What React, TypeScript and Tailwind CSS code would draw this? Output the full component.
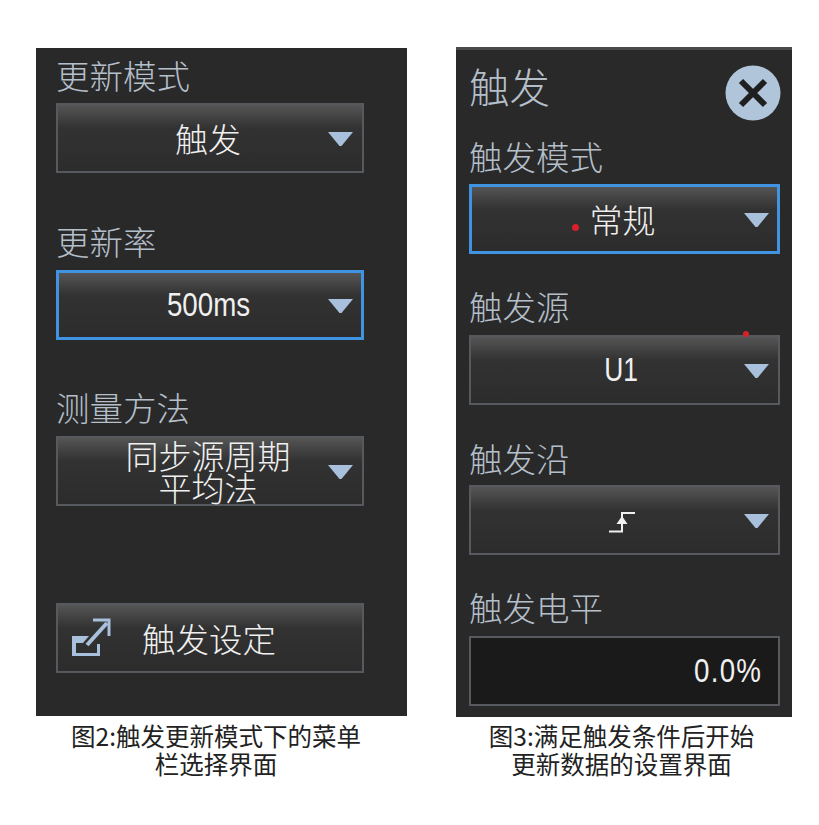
import type { ReactNode } from 'react'

const cjk = { fontFamily: '"Noto Sans CJK SC", "Noto Sans", sans-serif' }

function Arrow({ active }: { active?: boolean }) {
  return (
    <svg
      className={`absolute ${active ? 'right-[7px] top-[25px]' : 'right-[8px] top-[26px]'}`}
      width="27"
      height="16"
      viewBox="0 0 27 16"
    >
      <path d="M1 1 H26 L14.5 15 H12.5 Z" fill="#a9c0dc" />
    </svg>
  )
}

function Label({ children, className = '' }: { children: ReactNode; className?: string }) {
  return (
    <div className={`text-[33.5px] leading-[40px] font-light text-[#b4bfca] ${className}`}>{children}</div>
  )
}

function Select({ children, active, className = '' }: { children?: ReactNode; active?: boolean; className?: string }) {
  return (
    <div
      className={`relative flex h-[70px] items-center justify-center bg-gradient-to-b from-[#555555] via-[#323232] via-35% to-[#2c2c2c] ${
        active ? 'border-[3px] border-[#3f93e0]' : 'border-2 border-[#565a5f]'
      } ${className}`}
    >
      {children}
      <Arrow active={active} />
    </div>
  )
}

function Value({ children }: { children: ReactNode }) {
  return <span className="-ml-[4px] text-[33px] leading-[36px] font-light text-[#f0f0f0]">{children}</span>
}

function Digits({ children, className = '' }: { children: ReactNode; className?: string }) {
  return (
    <span
      className={`inline-block text-[33px] leading-[36px] text-[#f0f0f0] ${className}`}
      style={{ fontFamily: '"Liberation Sans", sans-serif' }}
    >
      {children}
    </span>
  )
}

function LeftPanel() {
  return (
    <div className="h-[668px] w-[371px] bg-[#292929] pl-[20px] pr-[43px]">
      <Label className="flex h-[53px] items-center">更新模式</Label>
      <Select className="mt-[2px]">
        <Value>触发</Value>
      </Select>

      <Label className="mt-[40px] flex h-[55px] items-center">更新率</Label>
      <Select active className="mt-[2px]">
        <Digits className="-ml-[2px] scale-x-[0.84]">500ms</Digits>
      </Select>

      <Label className="mt-[40px] flex h-[54px] items-center">测量方法</Label>
      <Select className="mt-[2px]">
        <div className="-ml-[4px] text-center text-[33px] leading-[32px] font-light text-[#f0f0f0]">
          同步源周期
          <br />
          平均法
        </div>
      </Select>

      <div className="mt-[97px] flex h-[70px] items-center border-2 border-[#565a5f] bg-gradient-to-b from-[#555555] via-[#323232] via-35% to-[#2c2c2c] pl-[14px]">
        <svg width="40" height="40" viewBox="0 0 40 40">
          <path d="M0 18 H17 L11 25 H4 V35 H25 V26 H28 V38 H0 Z" fill="#a9c0dc" />
          <path d="M15 27 L35 5" stroke="#a9c0dc" strokeWidth="4" fill="none" />
          <path d="M21 2 H37 V18" stroke="#a9c0dc" strokeWidth="3" fill="none" />
        </svg>
        <span className="ml-[30px] text-[33.5px] leading-[40px] font-light text-[#f0f0f0]">触发设定</span>
      </div>
    </div>
  )
}

function RightPanel() {
  return (
    <div className="h-[670px] w-[336px] border-t-[3px] border-[#4a4a4a] bg-[#292929] pl-[13px] pr-[12px]">
      <div className="flex h-[64px] items-end justify-between pt-[10px]">
        <span className="mb-[2px] text-[40.5px] leading-[52px] font-light text-[#b4bfca]">触发</span>
        <svg className="-mb-[7px] -mr-[1px]" width="56" height="56" viewBox="0 0 56 56">
          <circle cx="28" cy="28" r="27.5" fill="#b0c4da" />
          <path d="M16 16 L40 40 M40 16 L16 40" stroke="#1f1f1f" strokeWidth="6" />
        </svg>
      </div>

      <Label className="mt-[14px] flex h-[56px] items-center">触发模式</Label>
      <Select active>
        <span className="absolute left-[100px] top-[37px] h-[7px] w-[7px] rounded-full bg-[#d8202a]" />
        <Value>常规</Value>
      </Select>

      <Label className="mt-[23px] flex h-[58px] items-center">触发源</Label>
      <Select>
        <span className="absolute left-[272px] -top-[6px] h-[6px] w-[6px] rounded-full bg-[#d8202a]" />
        <Digits className="-ml-[6px] scale-x-[0.8]">U1</Digits>
      </Select>

      <Label className="mt-[25px] flex h-[55px] items-center">触发沿</Label>
      <Select>
        <svg className="-ml-[6px] mt-[4px]" width="28" height="22" viewBox="0 0 28 22">
          <path d="M1 20.5 H14 V2 H27" stroke="#f0f0f0" strokeWidth="2" fill="none" />
          <path d="M14 5 L19.5 13 H8.5 Z" fill="#f0f0f0" />
        </svg>
      </Select>

      <Label className="mt-[23px] flex h-[58px] items-center">触发电平</Label>
      <div className="flex h-[70px] items-center justify-end border-2 border-[#565a5f] bg-[#1a1a1a] pr-[16px]">
        <span
          className="inline-block origin-right scale-x-[0.84] text-[33px] leading-[36px] tracking-[1.5px] text-[#f0f0f0]"
          style={{ fontFamily: '"Liberation Sans", sans-serif' }}
        >
          0.0%
        </span>
      </div>
    </div>
  )
}

function Caption({ children }: { children: ReactNode }) {
  return <div className="text-center text-[24.5px] leading-[28px] text-[#222222]">{children}</div>
}

export default function App() {
  return (
    <div className="h-[825px] w-[819px] bg-white pl-[36px] pt-[47px]" style={cjk}>
      <div className="flex gap-[49px]">
        <div className="mt-px w-[371px]">
          <LeftPanel />
          <div className="mt-[6px] -ml-[11px]">
            <Caption>
              图2:触发更新模式下的菜单
              <br />
              栏选择界面
            </Caption>
          </div>
        </div>
        <div className="w-[336px]">
          <RightPanel />
          <div className="mt-[5px] -ml-[5px]">
            <Caption>
              图3:满足触发条件后开始
              <br />
              更新数据的设置界面
            </Caption>
          </div>
        </div>
      </div>
    </div>
  )
}
